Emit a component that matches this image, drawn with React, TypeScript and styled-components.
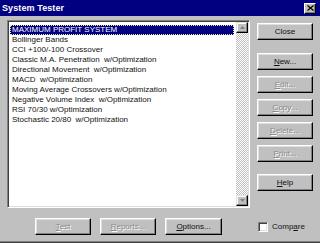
import styled, { createGlobalStyle } from "styled-components";

const GlobalStyle = createGlobalStyle`
  html, body {
    margin: 0;
    padding: 0;
    background: #c0c0c0;
  }
  * {
    box-sizing: border-box;
  }
`;

const Window = styled.div`
  width: 320px;
  height: 243px;
  background: #c0c0c0;
  display: flex;
  flex-direction: column;
  font-family: "Liberation Sans", Arial, sans-serif;
  font-size: 8px;
  color: #000;
  border-bottom: 1px solid #404040;
  box-shadow: inset 0 -1px #808080;
  overflow: hidden;
`;

const TitleBar = styled.div`
  height: 16px;
  flex: none;
  background: #000080;
  display: flex;
  align-items: center;
  justify-content: space-between;
  padding: 0 4px 0 2px;
`;

const Title = styled.span`
  color: #fff;
  font-weight: bold;
  font-size: 9px;
  letter-spacing: 0.1px;
`;

const TitleButton = styled.div`
  width: 12px;
  height: 11px;
  background: #c0c0c0;
  border: 1px solid;
  border-color: #fff #000 #000 #fff;
  box-shadow: inset -1px -1px #808080;
  display: flex;
  align-items: center;
  justify-content: center;
`;

const Body = styled.div`
  flex: 1;
  display: grid;
  grid-template-columns: 243px 56px;
  grid-template-rows: 188px auto;
  column-gap: 7px;
  padding: 4px 0 0 7px;
`;

const ListBox = styled.div`
  display: flex;
  border: 1px solid;
  border-color: #808080 #fff #fff #808080;
  box-shadow: inset 1px 1px #404040, inset -1px -1px #dfdfdf;
  padding: 1px;
  background: #fff;
`;

const ListArea = styled.div`
  flex: 1;
  padding: 3px 2px 0 1px;
  display: flex;
  flex-direction: column;
`;

const Item = styled.div<{ $selected?: boolean }>`
  height: 10px;
  line-height: 10px;
  padding-left: 2px;
  white-space: pre;
  background: ${(p) => (p.$selected ? "#000080" : "transparent")};
  color: ${(p) => (p.$selected ? "#fff" : "#111")};
  outline: ${(p) => (p.$selected ? "1px dotted #e8e8a0" : "none")};
  outline-offset: -1px;
`;

const ScrollBar = styled.div`
  width: 12px;
  display: flex;
  flex-direction: column;
  background-color: #fff;
  background-image: repeating-conic-gradient(#c0c0c0 0 25%, #fff 0 50%);
  background-size: 2px 2px;
`;

const ScrollTrack = styled.div`
  flex: 1;
`;

const ArrowButton = styled.div`
  width: 12px;
  height: 11px;
  background: #c0c0c0;
  border: 1px solid;
  border-color: #dfdfdf #000 #000 #dfdfdf;
  box-shadow: inset -1px -1px #808080, inset 1px 1px #fff;
  display: flex;
  align-items: center;
  justify-content: center;
`;

const ButtonColumn = styled.div`
  display: flex;
  flex-direction: column;
  padding-top: 3px;
  gap: 6px;
`;

const Spacer = styled.div<{ $h: number }>`
  height: ${(p) => p.$h}px;
  flex: none;
`;

const Button = styled.div<{ $disabled?: boolean; $w?: number }>`
  height: 17px;
  width: ${(p) => (p.$w ? `${p.$w}px` : "100%")};
  flex: none;
  background: #c0c0c0;
  border: 1px solid;
  border-color: #fff #000 #000 #fff;
  box-shadow: inset -1px -1px #808080, inset 1px 1px #dfdfdf;
  display: flex;
  align-items: center;
  justify-content: center;
  font-size: 8px;
  color: ${(p) => (p.$disabled ? "#8a8a8a" : "#111")};
  text-shadow: ${(p) => (p.$disabled ? "1px 1px #fff" : "none")};
  u {
    text-decoration: underline;
    text-underline-offset: 1px;
  }
`;

const BottomRow = styled.div`
  display: flex;
  gap: 9px;
  padding: 10px 0 0 28px;
`;

const CompareRow = styled.div`
  display: flex;
  align-items: center;
  height: 17px;
  margin-top: 10px;
  padding-left: 1px;
  gap: 4px;
`;

const CheckBox = styled.div`
  width: 10px;
  height: 10px;
  background: #fff;
  border: 1px solid;
  border-color: #808080 #fff #fff #808080;
  box-shadow: inset 1px 1px #404040, inset -1px -1px #dfdfdf;
`;

const Label = styled.span`
  font-size: 8px;
  color: #111;
  u {
    text-underline-offset: 1px;
  }
`;

const systems = [
  "MAXIMUM PROFIT SYSTEM",
  "Bollinger Bands",
  "CCI +100/-100 Crossover",
  "Classic M.A. Penetration  w/Optimization",
  "Directional Movement  w/Optimization",
  "MACD  w/Optimization",
  "Moving Average Crossovers w/Optimization",
  "Negative Volume Index  w/Optimization",
  "RSI 70/30 w/Optimization",
  "Stochastic 20/80  w/Optimization",
];

function Arrow({ up }: { up?: boolean }) {
  return (
    <svg width="5" height="3" viewBox="0 0 5 3">
      <polygon points={up ? "2.5,0 5,3 0,3" : "0,0 5,0 2.5,3"} fill="#808080" />
    </svg>
  );
}

export default function App() {
  return (
    <>
      <GlobalStyle />
      <Window>
        <TitleBar>
          <Title>System Tester</Title>
          <TitleButton>
            <svg width="7" height="6" viewBox="0 0 7 6">
              <path d="M0.5 0.5 L6.5 5.5 M6.5 0.5 L0.5 5.5" stroke="#000" strokeWidth="1.3" />
            </svg>
          </TitleButton>
        </TitleBar>
        <Body>
          <ListBox>
            <ListArea>
              {systems.map((s, i) => (
                <Item key={s} $selected={i === 0}>
                  {s}
                </Item>
              ))}
            </ListArea>
            <ScrollBar>
              <ArrowButton>
                <Arrow up />
              </ArrowButton>
              <ScrollTrack />
              <ArrowButton>
                <Arrow />
              </ArrowButton>
            </ScrollBar>
          </ListBox>
          <ButtonColumn>
            <Button>Close</Button>
            <Spacer $h={1} />
            <Button>
              <span><u>N</u>ew...</span>
            </Button>
            <Button $disabled>
              <span><u>E</u>dit...</span>
            </Button>
            <Button $disabled>
              <span><u>C</u>opy...</span>
            </Button>
            <Button $disabled>
              <span><u>D</u>elete...</span>
            </Button>
            <Button $disabled>
              <span><u>P</u>rint...</span>
            </Button>
            <Spacer $h={0} />
            <Button>
              <span><u>H</u>elp</span>
            </Button>
          </ButtonColumn>
          <BottomRow>
            <Button $disabled $w={56}>
              <span><u>T</u>est</span>
            </Button>
            <Button $disabled $w={56}>
              <span><u>R</u>eports...</span>
            </Button>
            <Button $w={57}>
              <span><u>O</u>ptions...</span>
            </Button>
          </BottomRow>
          <CompareRow>
            <CheckBox />
            <Label>
              Comp<u>a</u>re
            </Label>
          </CompareRow>
        </Body>
      </Window>
    </>
  );
}
